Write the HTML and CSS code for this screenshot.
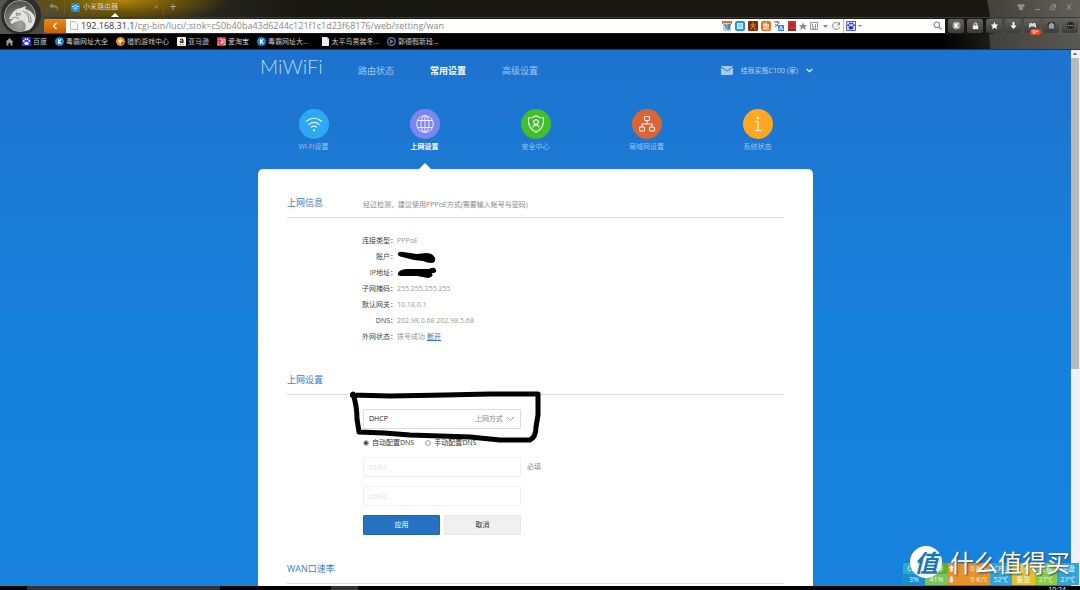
FILE: index.html
```html
<!DOCTYPE html>
<html lang="zh-CN">
<head>
<meta charset="utf-8">
<title>小米路由器</title>
<link rel="stylesheet" href="styles.css">
</head>
<body>
<header class="browser">
  <div class="top">
    <svg class="brand" viewBox="0 0 44 34">
      <defs><radialGradient id="ball" cx=".5" cy=".8" r=".8"><stop offset="0" stop-color="#a3a39f"/><stop offset=".6" stop-color="#70706b"/><stop offset="1" stop-color="#4a4a45"/></radialGradient></defs>
      <circle cx="21" cy="15" r="20" fill="#2d2d29"/>
      <circle cx="20" cy="16" r="15.500" fill="url(#ball)" stroke="#a5a5a0"/>
      <path d="M11 15Q14 9 21 8L26 6 25 9Q33 11 35 18 35 26 29 30L24 31Q28 26 24 22 21 19 19 21L15 22 12 24 10 22 13 19 9 19Z" fill="#e2e2df"/>
      <path d="M16 13l5 1-4 2zM23 11q7 4 6 12M26 11q6 5 5 12M12 18q4-2 7 1" fill="none" stroke="#8a8a86" stroke-width="1"/>
    </svg>
    <div class="tabs">
      <button class="plain undo" aria-label="撤销"><svg width="10" height="8" viewBox="0 0 10 8"><path d="M4 0L0 3l4 3V4c3 0 4 1 5 4 1-4-1-6-5-6z" fill="#85857b"/></svg></button>
      <div class="tab">
        <svg width="9" height="9" viewBox="0 0 9 9"><rect width="9" height="9" rx="1" fill="#0d8cf0"/><path d="M1 4q3.500-3 7 0M2.500 5.500q2-1.500 4 0" fill="none" stroke="#fff" stroke-width=".9"/><circle cx="4.500" cy="7" r=".7" fill="#fff"/></svg>
        <span>小米路由器</span>
        <button class="plain close" aria-label="关闭标签">×</button>
      </div>
      <button class="plain add" aria-label="新标签">+</button>
      <div class="window">
        <button class="plain" aria-label="皮肤"><svg width="8" height="8" viewBox="0 0 8 8"><path d="M2 1h1q1 1 2 0h1l2 1-1 2H6v3H2V4H1L0 2z" fill="#8d8d86"/></svg></button>
        <button class="plain" aria-label="最小化"><svg width="8" height="8" viewBox="0 0 8 8"><path d="M2 6.500h5" stroke="#8d8d86"/></svg></button>
        <button class="plain" aria-label="还原"><svg width="8" height="8" viewBox="0 0 8 8"><path d="M1.500 3.500h4v3h-4zM3.500 3V1.500h3v3H6" fill="none" stroke="#8d8d86"/></svg></button>
        <button class="plain" aria-label="关闭"><svg width="8" height="8" viewBox="0 0 8 8"><path d="M2 1.500l4 5M6 1.500l-4 5" stroke="#8d8d86" stroke-width="1.200"/></svg></button>
      </div>
    </div>
    <div class="bar">
      <button class="back" aria-label="后退"><svg width="6" height="8" viewBox="0 0 6 8"><path d="M4.500 1L1.500 4l3 3" fill="none" stroke="#fff" stroke-width="1.300"/></svg></button>
      <div class="address">
        <svg width="8" height="9" viewBox="0 0 8 9"><path d="M.5.500h4.500l2.500 2.500v5.500h-7z" fill="#f8f8f8" stroke="#bbb"/></svg>
        <span class="url"><b>192.168.31.1</b>/cgi-bin/luci/;stok=c50b40ba43d6244c121f1c1d23f68176/web/setting/wan</span>
        <div class="extras">
          <svg viewBox="0 0 10 10"><path d="M0 0h10v3H0z" fill="#e06a3c"/><path d="M1 2h8v8H1z" fill="#b9d5e2"/><path d="M2 4h2v4M5 4h4M5 6h3M5 8h3M7 3v5" stroke="#2f6d8e" fill="none"/></svg>
          <svg viewBox="0 0 10 10"><rect width="10" height="10" rx="2" fill="#1d98dc"/><path d="M2 2h6v6H2z" fill="#d8f1ff"/><path d="M3 4h4M3 6h4" stroke="#55b4e2"/></svg>
          <svg viewBox="0 0 10 10"><rect width="10" height="10" rx="1" fill="#7b2b0c"/><path d="M5 1v5M2 4h6M5 5L2 9M5 5l3 4" stroke="#f08523" fill="none"/></svg>
          <svg viewBox="0 0 10 10"><rect width="10" height="10" rx="2" fill="#f36b15"/><path d="M2 4h6M2 8h6M3 2v6M5 1v7M7 3v4" stroke="#fff" fill="none"/></svg>
          <svg viewBox="0 0 10 10"><path d="M0 1h6M3 0v2M1 6l4-4M1 3l4 3" stroke="#666" fill="none"/><rect x="4" y="4" width="6" height="6" fill="#3a83e4"/><path d="M5 9l2-4 2 4M6 8h2" stroke="#fff" fill="none" stroke-width=".8"/></svg>
          <svg viewBox="0 0 10 10"><path d="M1 0h8v10H1z" fill="#d12f32"/><path d="M1 8h8v2H1z" fill="#71343c"/><path d="M3 6l2-4 2 4" stroke="#8e1f24" fill="none"/></svg>
          <svg viewBox="0 0 10 10"><path d="M5 1l1 3h3L7 6l1 3-3-2-3 2 1-3-2-2h3z" fill="#8a8a8a"/></svg>
          <svg viewBox="0 0 10 10"><path d="M1.500 1.500h7v7h-7zM3.500 3v3H6M6.500 3v5M3 7.500h2" stroke="#999" fill="none"/></svg>
          <svg viewBox="0 0 10 10"><path d="M3 4h5L5.500 7z" fill="#888"/></svg>
          <svg viewBox="0 0 10 10"><path d="M8 3A3.500 3.500 0 1 0 8.500 6M8.500 1v3H6" stroke="#8a8a8a" fill="none"/></svg>
        </div>
        <div class="search">
          <svg width="10" height="10" viewBox="0 0 10 10"><path d="M.5.500h9v9h-9z" fill="#dfe2ff" stroke="#5555e4"/><g fill="#2a2add"><ellipse cx="5" cy="6.800" rx="2.400" ry="1.800"/><circle cx="2.300" cy="4.300" r="1"/><circle cx="4" cy="2.500" r="1"/><circle cx="6.200" cy="2.500" r="1"/><circle cx="7.900" cy="4.300" r="1"/></g></svg>
          <svg width="5" height="4" viewBox="0 0 5 4"><path d="M0 1h4L2 3z" fill="#888"/></svg>
          <input type="search" aria-label="搜索">
          <svg width="9" height="9" viewBox="0 0 9 9"><circle cx="3.800" cy="3.800" r="2.800" fill="none" stroke="#8a8a8a" stroke-width="1.200"/><path d="M6 6l2.500 2.500" stroke="#8a8a8a" stroke-width="1.400"/></svg>
        </div>
      </div>
      <div class="tools">
        <button aria-label="金山"><svg viewBox="0 0 10 10"><circle cx="5" cy="5" r="4.500" fill="#999"/><path d="M3.500 2v6M7 2.500L4 5l3 2.500" stroke="#fff" fill="none" stroke-width="1.400"/></svg></button>
        <button aria-label="锁定"><svg viewBox="0 0 10 10"><path d="M2 5h6v4H2z" fill="#fff"/><path d="M3.500 5V3q1.500-2 3 0v2" stroke="#fff" fill="none"/></svg></button>
        <button aria-label="收藏"><svg viewBox="0 0 10 10"><path d="M5 1l1.200 2.800L9 4 7 6l.8 3L5 7.500 2.200 9 3 6 1 4l2.800-.2z" fill="#fff"/></svg></button>
        <button aria-label="下载"><svg viewBox="0 0 10 10"><path d="M4 1h2v4h2.500L5 9 1.500 5H4z" fill="#fff"/></svg></button>
        <button aria-label="游戏"><svg viewBox="0 0 10 10"><path d="M1 8q0-6 2-6l2 1 2-1q2 0 2 6L7 6H3z" fill="#ddd"/></svg><span class="badge">9+</span></button>
        <button aria-label="工具"><svg viewBox="0 0 10 10"><circle cx="5" cy="5" r="4.500" fill="#333"/><path d="M2.500 4h5v4h-5zM4 4V2.500h2V4" fill="#999" stroke="#bbb" stroke-width=".7"/></svg></button>
        <button aria-label="更多"><svg viewBox="0 0 10 10"><circle cx="5" cy="5" r="4.500" fill="#292926" stroke="#777" stroke-width=".5"/><path d="M2 5h6" stroke="#aaa" stroke-dasharray="1.500 .6"/></svg></button>
      </div>
    </div>
  </div>
  <nav class="bookmarks" aria-label="书签">
    <a href="#" aria-label="主页"><svg viewBox="0 0 9 9"><path d="M.5 5l4-4 4 4H7.500v3.500h-2V6h-2v2.500h-2V5z" fill="#999"/></svg></a>
    <a href="#"><svg viewBox="0 0 9 9"><rect width="9" height="9" fill="#3030dd"/><g fill="#fff"><ellipse cx="4.500" cy="6.300" rx="2.200" ry="1.600"/><circle cx="1.800" cy="4" r=".9"/><circle cx="3.500" cy="2.200" r=".9"/><circle cx="5.600" cy="2.200" r=".9"/><circle cx="7.200" cy="4" r=".9"/></g></svg>百度</a>
    <a href="#"><svg viewBox="0 0 9 9"><circle cx="4.500" cy="4.500" r="4.500" fill="#1684dd"/><path d="M3.500 2v5M6.300 2.200L4 4.500l2.300 2.300" stroke="#fff" fill="none" stroke-width="1.100"/></svg>毒霸网址大全</a>
    <a href="#"><svg viewBox="0 0 9 9"><circle cx="4.500" cy="4.500" r="4.500" fill="#e9851f"/><path d="M2 3l3-1 2 2-2 1 1 2-3-1z" fill="#fff0b5"/><path d="M5 6l3-1-2 3z" fill="#a82a12"/></svg>猎豹游戏中心</a>
    <a href="#"><svg viewBox="0 0 9 9"><rect width="9" height="9" rx="1" fill="#fff"/><path d="M3 2.500q3-1.500 3 .5v3M6 4Q3 3.500 3 5t3 0" stroke="#111" fill="none"/><path d="M1.500 7q3 1.500 6 0" stroke="#f49a22" fill="none"/></svg>亚马逊</a>
    <a href="#"><svg viewBox="0 0 9 9"><rect width="9" height="9" rx="1" fill="#ee2a3a"/><path d="M1 2l1 1M1 4l1 1M1 8l1-2M4 1L3 3M4 2.500h4v5H6M4 4h3M3 5.500h4M5 3v4H4V6" stroke="#fff" fill="none" stroke-width=".7"/></svg>爱淘宝</a>
    <a href="#"><svg viewBox="0 0 9 9"><circle cx="4.500" cy="4.500" r="4.500" fill="#1684dd"/><path d="M3.500 2v5M6.300 2.200L4 4.500l2.300 2.300" stroke="#fff" fill="none" stroke-width="1.100"/></svg>毒霸网址大...</a>
    <a href="#" class="wide"><svg viewBox="0 0 9 9"><path d="M1 0h5l2 2v7H1z" fill="#eee"/><path d="M6 0v2h2" fill="#aaa"/></svg>太平鸟男装冬...</a>
    <a href="#"><svg viewBox="0 0 9 9"><circle cx="4.500" cy="4.500" r="3.800" fill="#111" stroke="#2190dd" stroke-width="1.300"/><path d="M3 2.200l3.800 2.300L3 6.800z" fill="#f0482a"/></svg>郭德假新段...</a>
  </nav>
</header>

<div class="viewport">
  <div class="page">
    <div class="wrap">
      <div class="head">
        <a href="#" class="logo">MiWiFi</a>
        <nav class="menu" aria-label="主菜单">
          <a href="#">路由状态</a>
          <a href="#" class="on">常用设置</a>
          <a href="#">高级设置</a>
        </nav>
        <button class="plain user">
          <svg width="12" height="9" viewBox="0 0 12 9"><rect width="12" height="9" rx="1" fill="#a5caef"/><path d="M0 1l6 4 6-4" fill="none" stroke="#2b7bd0"/></svg>
          <span>给我买瓶C100 (家)</span>
          <svg width="7" height="5" viewBox="0 0 7 5"><path d="M.7 1l2.800 2.700L6.300 1" fill="none" stroke="#e8f3fd" stroke-width="1.300"/></svg>
        </button>
      </div>
      <nav class="sections" aria-label="设置">
        <a href="#"><svg viewBox="0 0 30 30"><circle cx="15" cy="15" r="15" fill="#2fa8f2"/><path d="M7 12.500q8-6.500 16 0M9.500 15.700q5.500-4.500 11 0M12 18.500q3-2.600 6 0" fill="none" stroke="#e5f5ff" stroke-width="1.200"/><circle cx="15" cy="21.200" r="1" fill="#fff"/></svg>Wi-Fi设置</a>
        <a href="#" class="on"><svg viewBox="0 0 30 30"><circle cx="15" cy="15" r="15" fill="#7b86f1"/><g fill="none" stroke="#eef0ff"><circle cx="15" cy="15" r="8.300"/><ellipse cx="15" cy="15" rx="4" ry="8.300"/><path d="M15 6.700v16.600M8 11.500h14M8 18.500h14"/></g></svg>上网设置</a>
        <a href="#"><svg viewBox="0 0 30 30"><circle cx="15" cy="15" r="15" fill="#41bd2e"/><g fill="none" stroke="#f0ffeb" stroke-width="1.100"><path d="M15 6.700q3.500 2.300 7.500 2.300 1.200 10-7.500 14.300Q6.300 19 7.500 9q4 0 7.500-2.300z"/><circle cx="15" cy="13" r="2.300"/><path d="M14 15l-2.300 3.500M16 15l2.300 3.500M13.200 16.500h3.600"/></g></svg>安全中心</a>
        <a href="#"><svg viewBox="0 0 30 30"><circle cx="15" cy="15" r="15" fill="#d86537"/><g fill="none" stroke="#fff1eb" stroke-width="1.100"><rect x="12.500" y="7.500" width="5" height="4" rx="1"/><rect x="7.500" y="18" width="5" height="4" rx="1"/><rect x="17.500" y="18" width="5" height="4" rx="1"/><path d="M15 11.500V15M10 18v-3h10v3"/></g></svg>局域网设置</a>
        <a href="#"><svg viewBox="0 0 30 30"><circle cx="15" cy="15" r="15" fill="#ffa622"/><circle cx="14.800" cy="9" r="1.300" fill="#fff"/><path d="M12 12.500h3V21.500M11.500 21.500h7" fill="none" stroke="#fff4e0" stroke-width="1.200"/></svg>系统状态</a>
      </nav>
      <main class="card">
        <section>
          <div class="title"><h2>上网信息</h2><p>经过检测，建议使用PPPoE方式(需要输入帐号与密码)</p></div>
          <dl class="info">
            <dt>连接类型：</dt><dd>PPPoE</dd>
            <dt>账户：</dt><dd><svg class="mark" width="40" height="14" viewBox="0 0 40 14"><path d="M1 2Q3 0 6 1L20 3 30 2Q37 3 38 7 39 11 35 12 30 12 26 10L17 9 5 6Q0 5 1 2Z" fill="#000"/></svg></dd>
            <dt>IP地址：</dt><dd><svg class="mark" width="40" height="14" viewBox="0 0 40 14"><path d="M1 6Q3 2 11 2L32 2Q38-1 39 3 40 6 35 6 37 10 31 11L20 9 4 9Q0 9 1 6Z" fill="#000"/></svg></dd>
            <dt>子网掩码：</dt><dd>255.255.255.255</dd>
            <dt>默认网关：</dt><dd>10.18.0.1</dd>
            <dt>DNS：</dt><dd>202.98.0.68 202.98.5.68</dd>
            <dt>外网状态：</dt><dd>拨号成功 <a href="#">断开</a></dd>
          </dl>
        </section>
        <section>
          <div class="title"><h2>上网设置</h2></div>
          <form class="form">
            <div class="pick">
              <select id="mode"><option>DHCP</option></select>
              <label for="mode">上网方式<svg width="9" height="6" viewBox="0 0 9 6"><path d="M1 1l3.500 3.500L8 1" fill="none" stroke="#999"/></svg></label>
              <svg class="scribble" width="192" height="52" viewBox="0 0 192 52"><path d="M3 3Q7 15 7 28L9 41 34 42 60 44 90 45 120 46 150 49 180 49Q186 46 186 36L188 24 188 3 140 3 95 4 40 5 2 4" fill="none" stroke="#000" stroke-width="5" stroke-linejoin="round" stroke-linecap="round"/></svg>
            </div>
            <div class="radios">
              <label><input type="radio" name="dns" checked>自动配置DNS</label>
              <label><input type="radio" name="dns">手动配置DNS</label>
            </div>
            <div class="line"><input type="text" id="dns1" placeholder="DNS1"><label for="dns1">必填</label></div>
            <div class="line"><input type="text" placeholder="DNS2" aria-label="DNS2"></div>
            <div class="actions"><button type="button" class="apply">应用</button><button type="button">取消</button></div>
          </form>
        </section>
        <section>
          <div class="title"><h2>WAN口速率</h2></div>
        </section>
      </main>
    </div>
  </div>
  <div class="scroll"><svg width="8" height="8" viewBox="0 0 8 8"><path d="M1.500 5L4 2.500 6.500 5z" fill="#777"/></svg><div class="thumb"></div></div>
</div>
<footer class="taskbar"><i></i><i class="small"></i><span>10:24</span></footer>

<aside class="monitor">
  <div class="cpu"><span>CPU</span><span>3%</span></div>
  <div class="mem"><span>内存</span><span>41%</span></div>
  <div class="net"><span><b>⬆</b>0 K/S</span><span><b>⬇</b>0 K/S</span></div>
  <div><span>CPU</span><span>52℃</span></div>
  <div class="gpu"><span>显卡</span><span>集显</span></div>
  <div class="mem2"><span>主板</span><span>27℃</span></div>
  <div><span>硬盘</span><span>27℃</span></div>
</aside>
<div class="stamp"><span class="seal">值</span><span>什么值得买</span></div>
</body>
</html>
```

FILE: styles.css
```css
* { box-sizing: border-box; }
body {
  margin: 0;
  height: 100vh;
  display: flex;
  flex-direction: column;
  overflow: hidden;
  font: 7px/10px "Open Sans", "Noto Sans CJK SC", sans-serif;
  color: #333;
}
a { color: inherit; text-decoration: none; }
svg { display: block; flex: none; }
button, input, select { font: inherit; color: inherit; margin: 0; padding: 0; border: 0; }
.plain { background: none; }

/* Browser chrome */
.browser { flex: none; background: #181810; border-bottom: 1px solid #123a6b; }
.top {
  display: grid;
  grid-template-columns: 44px 1fr;
  grid-template-rows: 17px 17px;
  background:
    radial-gradient(ellipse 110px 24px at 120px 0, #b18a08, #6b5308 50%, transparent),
    linear-gradient(80deg, transparent calc(100% - 92px), #42423b calc(100% - 91px), #62625a),
    linear-gradient(90deg, #55554d, #33332a 130px, #181810 300px);
}
.brand { grid-row: span 2; width: 44px; height: 34px; }
.tabs { display: flex; align-items: center; height: 14px; color: #d8d4c4; }
.undo { width: 20px; display: flex; justify-content: center; }
.tab {
  position: relative;
  width: 100px;
  height: 14px;
  padding: 0 4px 0 6px;
  display: flex;
  align-items: center;
  gap: 3px;
  border: 1px solid #6b5d26;
  border-width: 0 1px;
}
.tab::after {
  content: "";
  position: absolute;
  left: 46px;
  top: 13px;
  border: 4px solid transparent;
  border-width: 0 4px 4px;
  border-bottom-color: #fff;
}
.close { margin-left: auto; color: #99917a; font-size: 9px; }
.add { width: 18px; font-size: 12px; color: #aaa89a; }
.window { margin-left: auto; display: flex; gap: 8px; padding-right: 7px; }
.bar { display: flex; align-items: center; height: 16px; padding-right: 2px; border-top: 1px solid #3c3c33; }
.back {
  width: 22px;
  height: 14px;
  display: grid;
  place-items: center;
  background: linear-gradient(#ed8a16, #c76000);
  border-radius: 2px 0 0 2px;
}
.address { flex: 1; height: 14px; display: flex; align-items: center; background: #fff; padding-left: 4px; margin-right: 3px; }
.url { margin-left: 3px; font-size: 9px; color: #888; white-space: nowrap; }
.url b { font-weight: 400; color: #333; }
.extras { margin-left: auto; display: flex; gap: 3px; padding-right: 2px; }
.extras svg { width: 10px; height: 10px; }
.extras svg:nth-child(n+7) { margin-left: -2px; }
.search { width: 102px; height: 14px; display: flex; align-items: center; gap: 2px; padding: 0 3px 0 2px; border-left: 1px solid #bbb; }
.search input { flex: 1; min-width: 0; height: 12px; background: none; }
.tools { display: flex; gap: 3px; }
.tools button {
  position: relative;
  width: 16px;
  height: 14px;
  display: grid;
  place-items: center;
  border-radius: 2px;
  background: linear-gradient(#62625e, #3b3b37);
}
.tools svg { width: 9px; height: 9px; }
.badge { position: absolute; right: -1px; bottom: -2px; padding: 0 2px; font-size: 6px; line-height: 6px; border-radius: 3px; background: #ec4a13; color: #fff; }
.bookmarks {
  display: flex;
  align-items: center;
  gap: 8px;
  height: 15px;
  padding-left: 5px;
  background: linear-gradient(85deg, #000 calc(100% - 140px), #1c1c18 calc(100% - 91px), #42423b calc(100% - 90px), #5a5a53);
  color: #c8c8c8;
}
.bookmarks a { display: flex; align-items: center; gap: 2px; white-space: nowrap; }
.bookmarks svg { width: 9px; height: 9px; }
.bookmarks .wide { margin-left: 4px; }

/* Router page */
.viewport { flex: 1; min-height: 0; display: flex; }
.page { flex: 1; min-width: 0; overflow: hidden; background: linear-gradient(#1d73cf, #1b79d4 120px, #1782de 300px, #1783df); }
.wrap { max-width: 555px; margin: 0 auto; }
.head { display: flex; align-items: center; height: 41px; padding: 0 0 0 2px; color: #9cc5ec; }
.logo { font: 300 20px/28px Lato, sans-serif; width: 98px; padding-bottom: 9px; color: #b9d8f5; }
.menu { display: flex; gap: 36px; font-size: 9px; }
.menu .on, .sections .on { color: #fff; font-weight: 700; }
.user { margin-left: auto; display: flex; align-items: center; gap: 8px; color: #b5d4f2; }
.sections { display: grid; grid-template-columns: repeat(5, 1fr); padding-top: 18px; height: 78px; color: #9cc5ec; }
.sections a { position: relative; display: flex; flex-direction: column; align-items: center; gap: 3px; }
.sections svg { width: 30px; height: 30px; }
.sections .on::after {
  content: "";
  position: absolute;
  bottom: 0;
  border: 6px solid transparent;
  border-width: 0 6px 6px;
  border-bottom-color: #fff;
}
.card { background: #fff; border-radius: 5px 5px 0 0; padding: 26px 29px 60px; }
.title { display: flex; align-items: center; padding-bottom: 7px; border-bottom: 1px solid #ddd; }
h2 { width: 76px; margin: 0; font-size: 9px; line-height: 15px; font-weight: 400; color: #3b7dc6; white-space: nowrap; }
.title p { margin: 4px 0 0; color: #888; }
.info {
  display: grid;
  grid-template-columns: 110px 1fr;
  margin: 15px 0 27px;
  line-height: 16px;
}
dt { text-align: right; color: #444; }
dd { margin: 0; color: #999; display: flex; align-items: center; gap: 2px; }
dd a { color: #2b73c5; text-decoration: underline; }
.mark { margin-top: 2px; }
.form { padding: 14px 0 26px 76px; display: flex; flex-direction: column; gap: 9px; }
.pick { position: relative; width: 158px; height: 20px; }
.pick select { width: 100%; height: 100%; appearance: none; border: 1px solid #ddd; padding: 0 5px; background: #fff; color: #222; border-radius: 1px; }
.pick label { position: absolute; right: 6px; top: 5px; display: flex; align-items: center; gap: 3px; color: #888; pointer-events: none; }
.scribble { position: absolute; left: -13px; top: -18px; pointer-events: none; }
.radios { display: flex; gap: 11px; }
.radios label { display: flex; align-items: center; gap: 3px; }
.radios input {
  appearance: none;
  width: 6px;
  height: 6px;
  border: 1px solid #aaa;
  border-radius: 50%;
  background: #eee;
}
.radios input:checked { background: radial-gradient(#333 1px, #aaa 2px); }
.line { display: flex; align-items: center; gap: 6px; color: #888; }
.line input { width: 158px; height: 20px; padding: 0 5px; border: 1px solid #f1f1f1; background: #fff; }
.line input::placeholder { color: #e2e2e2; opacity: 1; }
.actions { display: flex; gap: 4px; }
.actions button { width: 77px; height: 20px; border: 1px solid #e6e6e6; border-radius: 1px; background: #f0f0f0; }
.actions .apply { background: #2572c0; border-color: #2068b3; color: #fff; }
.scroll { width: 9px; background: #f1f1f1; }
.thumb { height: 58%; margin-right: 1px; background: #b9b9b9; }

.taskbar { position: relative; flex: none; height: 4px; overflow: hidden; display: flex; gap: 111px; padding-left: 27px; background: #000; color: #fff; }
.taskbar i { width: 193px; background: #333; }
.taskbar .small { width: 27px; }
.taskbar span { margin-left: auto; padding-right: 14px; line-height: 7px; }

/* Floating desktop widgets */
.monitor { position: absolute; right: 1px; bottom: 5px; display: flex; color: #e8f5ff; }
.monitor div { width: 22px; height: 22px; display: flex; flex-direction: column; text-align: center; background: #35a3d5; }
.monitor span { height: 11px; line-height: 11px; }
.monitor .cpu { background: linear-gradient(#2cabc9 50%, #168ed0 50%); }
.monitor .mem { width: 23px; background: linear-gradient(#5bb32a 50%, #7cc45c 50%); }
.monitor .net { width: 42px; background: #e8922a; }
.monitor .net span { display: flex; justify-content: space-between; padding: 0 3px 0 0; }
.monitor .gpu { width: 23px; background: #e5c126; }
.monitor .mem2 { background: #87c94b; }
.stamp {
  position: absolute;
  right: 10px;
  bottom: 12px;
  display: flex;
  align-items: center;
  gap: 8px;
  color: #fff;
  font: 24px/32px "Noto Sans CJK SC", sans-serif;
  text-shadow: 1px 1px 2px #345;
}
.seal { width: 32px; height: 32px; border-radius: 50%; background: #fff; color: #1677bd; text-align: center; font-style: italic; font-weight: 700; text-shadow: none; }
```
